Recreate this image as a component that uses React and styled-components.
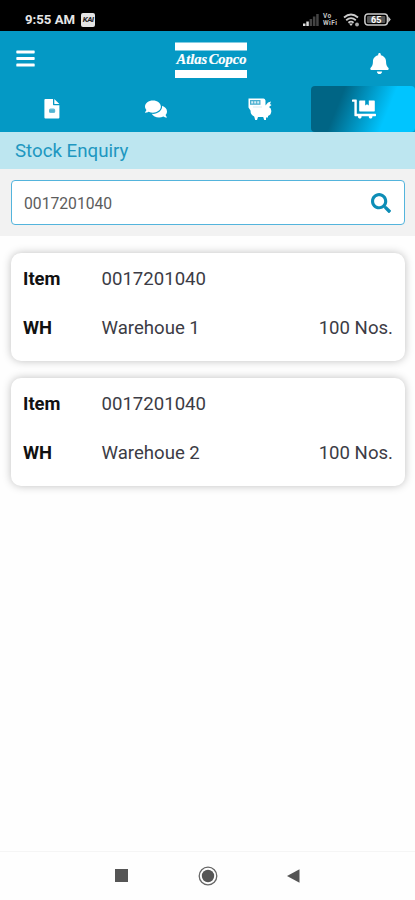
import React from "react";
import styled, { createGlobalStyle, css } from "styled-components";
import {
	FaBars,
	FaBell,
	FaComments,
	FaDollyFlatbed,
	FaSearch,
} from "react-icons/fa";

const GlobalStyle = createGlobalStyle`
	* {
		box-sizing: border-box;
	}

	body {
		margin: 0;
		background-color: #fefefe;
		font-family: Roboto, "Liberation Sans", sans-serif;
	}

	svg {
		display: block;
	}
`;

const Screen = styled.div`
	display: flex;
	flex-direction: column;
	width: 415px;
	height: 900px;
	overflow: hidden;
	background-color: #fefefe;
`;

const StatusBar = styled.div`
	display: flex;
	align-items: center;
	justify-content: space-between;
	height: 31px;
	flex-shrink: 0;
	padding: 8px 24px 0 25px;
	background-color: black;
	color: #e6e6e6;
`;

const StatusGroup = styled.div`
	display: flex;
	align-items: center;
	gap: ${(props) => props.$gap}px;
`;

const Clock = styled.span`
	font-size: 13.2px;
	font-weight: 700;
	line-height: 16px;
	white-space: nowrap;
`;

const Badge = styled.span`
	width: 14px;
	height: 14px;
	border-radius: 2px;
	background-color: #e4e4e4;
	color: #222;
	font-size: 8px;
	font-weight: 700;
	font-style: italic;
	line-height: 14px;
	letter-spacing: -0.6px;
	text-align: center;
`;

const Carrier = styled.span`
	width: 16px;
	font-size: 6.5px;
	font-weight: 700;
	line-height: 7px;
	letter-spacing: 0.4px;
	color: #c4c4c4;
`;

const Header = styled.header`
	height: 101px;
	flex-shrink: 0;
	background-color: #0499c5;
	color: white;
`;

const TopBar = styled.div`
	display: grid;
	grid-template-columns: 160px 72px 1fr;
	height: 55px;
	padding: 0 25px 0 15px;
`;

const MenuButton = styled.div`
	padding-top: 17px;
`;

const BellButton = styled.div`
	display: flex;
	justify-content: flex-end;
	padding-top: 22px;
`;

const Logo = styled.div`
	padding-top: 11px;
`;

const Tabs = styled.nav`
	display: grid;
	grid-template-columns: repeat(4, 1fr);
	height: 46px;
`;

const Tab = styled.div`
	display: flex;
	align-items: center;
	justify-content: center;
	padding: 0 0 1px 1px;

	${(props) =>
		props.$active &&
		css`
			border-radius: 4px;
			background: linear-gradient(
				112deg,
				#006585 0%,
				#006585 28%,
				#00c5ff 71%,
				#00c5ff 100%
			);
		`}
`;

const PageTitle = styled.h1`
	height: 37px;
	flex-shrink: 0;
	margin: 0;
	padding-left: 15px;
	background-color: #bde6f0;
	color: #2097c0;
	font-size: 18.7px;
	font-weight: 400;
	line-height: 38px;
`;

const SearchArea = styled.div`
	height: 67px;
	flex-shrink: 0;
	padding: 11px 10px 0 11px;
	background-color: #f2f2f2;
`;

const SearchBox = styled.div`
	display: flex;
	align-items: center;
	justify-content: space-between;
	height: 45px;
	padding: 0 13px 0 12px;
	border: 1px solid #53b4dc;
	border-radius: 4px;
	background-color: white;
	color: #0d8db6;
`;

const SearchInput = styled.input`
	width: 200px;
	padding: 2px 0 0;
	border: none;
	outline: none;
	background: none;
	color: #5c5c5c;
	font-family: inherit;
	font-size: 15.7px;
`;

const Cards = styled.main`
	display: flex;
	flex-direction: column;
	flex: 1;
	gap: 17px;
	padding: 17px 10px 0 11px;
`;

const Card = styled.section`
	display: flex;
	flex-direction: column;
	height: 108px;
	padding: 2px 12px 0;
	border-radius: 10px;
	background-color: white;
	box-shadow: 0 0 8px rgba(0, 0, 0, 0.25);
`;

const Row = styled.div`
	display: grid;
	grid-template-columns: 78.5px 1fr auto;
	height: 48.5px;
	line-height: 49px;
	font-size: 18.6px;
	color: #3c3c45;
`;

const Label = styled.span`
	color: #111;
	font-size: 18.4px;
	font-weight: 700;
	line-height: 48px;
`;

const Value = styled.span`
	white-space: nowrap;
`;

const NavBar = styled.div`
	display: flex;
	align-items: center;
	justify-content: space-between;
	height: 49px;
	flex-shrink: 0;
	padding: 0 115px 1px;
	border-top: 1px solid #f5f5f5;
`;

const Signal = () => (
	<svg width="16" height="12" viewBox="0 0 16 12">
		<path d="M0 12V9.5h2.5V12zM3.3 12V7.5h2.5V12z" fill="#ddd" />
		<path d="M6.6 12V5h2.5v7zM9.9 12V2.5h2.5V12zM13.2 12V0h2.5v12z" fill="#444" />
	</svg>
);

const Wifi = () => (
	<svg width="17" height="14" viewBox="0 0 17 14" fill="none" stroke="#ccc">
		<path d="M1 4.5Q8 -1.5 15 4.5M3.2 7.2Q8 3 12.8 7.2M5.4 9.7Q8 7.5 10.6 9.7" strokeWidth="1.8" />
		<path d="M6 10.5L8 13l2-2.5z" fill="#ccc" stroke="none" />
		<circle cx="14" cy="11.5" r="1.9" fill="#aaa" stroke="none" />
	</svg>
);

const Battery = () => (
	<svg width="27" height="13" viewBox="0 0 27 13">
		<rect x="0.9" y="0.9" width="22.5" height="11.2" rx="3" fill="none" stroke="#ccc" strokeWidth="1.5" />
		<path d="M24.2 3.2L26.8 6.5L24.2 9.8z" fill="#ccc" />
		<rect x="3" y="3" width="18.3" height="7" rx="1" fill="#555" />
		<text x="12.2" y="9.8" textAnchor="middle" fill="white" fontSize="9" fontWeight="700">
			65
		</text>
	</svg>
);

const Brand = () => (
	<svg width="72" height="37" viewBox="0 0 72 37" fill="white">
		<rect x="0" y="0.5" width="72" height="8" />
		<text
			x="1.5"
			y="22"
			textLength="70"
			lengthAdjust="spacingAndGlyphs"
			fontFamily="Liberation Serif, serif"
			fontSize="14"
			fontStyle="italic"
			fontWeight="700"
			wordSpacing="-2"
			stroke="white"
			strokeWidth="0.2"
		>
			Atlas Copco
		</text>
		<rect x="0" y="28" width="72" height="8" />
	</svg>
);

const DocumentIcon = () => (
	<svg width="16" height="20" viewBox="0 0 16 20">
		<path d="M1.4 0H9v5.2c0 .6.4 1 1 1h5.4V18.6q0 1-1 1H1.4q-1 0-1-1V1q0-1 1-1z" fill="white" />
		<path d="M10.3 0L15.4 4.900H10.3z" fill="white" />
		<rect x="5" y="9.5" width="6.2" height="4.5" rx="1.5" fill="#66bdd8" />
		<path d="M5.500 12h5" stroke="#3ca9cb" />
	</svg>
);

// air compressor: control panel, tank and feet
const CompressorIcon = () => (
	<svg width="24" height="22" viewBox="0 0 24 22" fill="white">
		<path d="M0.5 0.5H15.5q1.5 0 2 2V7.5L20 4.5L23 3.5L22 6L23.5 7L21 9q2.5 1 2.3 4.500-.3 3.5-3.3 4.500v1.500h-2V22h-1.800l-1-3H10l-1 3H7.2l-1-3.500Q2.500 17 2.500 12.500L0.500 9.500z" />
		<rect x="2" y="2" width="10.5" height="4.8" fill="#4aafd0" />
		<path d="M3.2 3.2h2v2.4h-2zM6.2 3.2h2v2.4h-2zM9.2 3.2h2v2.4h-2z" fill="#d5edf5" />
		<path d="M5 9h9" stroke="#d5edf5" />
	</svg>
);

const stock = [
	{ item: "0017201040", warehouse: "Warehoue 1", quantity: "100 Nos." },
	{ item: "0017201040", warehouse: "Warehoue 2", quantity: "100 Nos." },
];

const StockCard = ({ item, warehouse, quantity }) => {
	return (
		<Card>
			<Row>
				<Label>Item</Label>
				<Value>{item}</Value>
			</Row>
			<Row>
				<Label>WH</Label>
				<Value>{warehouse}</Value>
				<Value>{quantity}</Value>
			</Row>
		</Card>
	);
};

const App = () => {
	return (
		<Screen>
			<GlobalStyle />
			<StatusBar>
				<StatusGroup $gap={6}>
					<Clock>9:55 AM</Clock>
					<Badge>KAI</Badge>
				</StatusGroup>
				<StatusGroup $gap={4}>
					<Signal />
					<Carrier>
						Vo
						<br />
						WiFi
					</Carrier>
					<Wifi />
					<Battery />
				</StatusGroup>
			</StatusBar>
			<Header>
				<TopBar>
					<MenuButton>
						<FaBars size={21} />
					</MenuButton>
					<Logo>
						<Brand />
					</Logo>
					<BellButton>
						<FaBell size={21} />
					</BellButton>
				</TopBar>
				<Tabs>
					<Tab>
						<DocumentIcon />
					</Tab>
					<Tab>
						<FaComments size={22} />
					</Tab>
					<Tab>
						<CompressorIcon />
					</Tab>
					<Tab $active>
						<FaDollyFlatbed size={24} />
					</Tab>
				</Tabs>
			</Header>
			<PageTitle>Stock Enquiry</PageTitle>
			<SearchArea>
				<SearchBox>
					<SearchInput defaultValue="0017201040" />
					<FaSearch size={20} />
				</SearchBox>
			</SearchArea>
			<Cards>
				{stock.map((entry) => (
					<StockCard key={entry.warehouse} {...entry} />
				))}
			</Cards>
			<NavBar>
				<svg width="13" height="13" viewBox="0 0 13 13">
					<rect width="13" height="13" fill="#555" />
				</svg>
				<svg width="20" height="20" viewBox="0 0 20 20">
					<circle cx="10" cy="10" r="8.8" fill="none" stroke="#666" strokeWidth="1.3" />
					<circle cx="10" cy="10" r="6.2" fill="#555" />
				</svg>
				<svg width="13" height="14" viewBox="0 0 13 14">
					<path d="M0 7L12.5 0.3V13.7z" fill="#555" />
				</svg>
			</NavBar>
		</Screen>
	);
};

export default App;
